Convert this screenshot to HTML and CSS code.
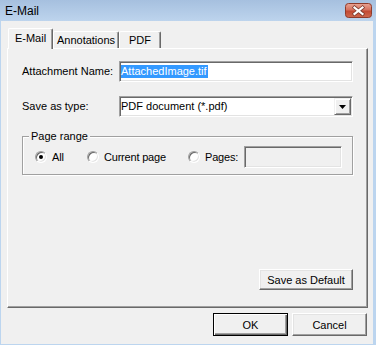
FILE: index.html
```html
<!DOCTYPE html>
<html lang="en">
  <head>
    <meta charset="UTF-8" />
    <title>E-Mail</title>
    <link rel="stylesheet" href="styles.css">
  </head>
  <body>
    <div class="window">
      <header class="titlebar">
        <span class="title">E-Mail</span>
        <button class="close" type="button">
          <svg width="27" height="15" viewBox="0 0 27 15">
            <defs>
              <linearGradient id="closeBg" x1="0" y1="0" x2="0" y2="1">
                <stop offset="0" stop-color="#e9a595" />
                <stop offset="0.45" stop-color="#d4715e" />
                <stop offset="0.55" stop-color="#c24a33" />
                <stop offset="1" stop-color="#cf6a4f" />
              </linearGradient>
            </defs>
            <rect x="0.5" y="0.5" width="26" height="14" rx="3" fill="url(#closeBg)" stroke="#8e3b2b" />
            <path d="M9.5 4.5 L17.5 11 M17.5 4.5 L9.5 11" stroke="#7a3a2e" stroke-width="3.6" stroke-linecap="square" />
            <path d="M9.5 4.5 L17.5 11 M17.5 4.5 L9.5 11" stroke="#ffffff" stroke-width="2.2" stroke-linecap="square" />
          </svg>
        </button>
      </header>

      <main class="frame">
        <nav class="tabs">
          <div class="tab tab-email active">E-Mail</div>
          <div class="tab tab-annotations">Annotations</div>
          <div class="tab tab-pdf">PDF</div>
        </nav>

        <section class="panel">
          <div class="row">
            <label class="row-label">Attachment Name:</label>
            <div class="field"><span class="selected-text">AttachedImage.tif</span></div>
          </div>

          <div class="row">
            <label class="row-label">Save as type:</label>
            <div class="field combo">
              <span class="combo-value">PDF document (*.pdf)</span>
              <span class="drop">
                <svg width="7" height="4" viewBox="0 0 7 4"><path d="M0 0 H7 L3.5 4 Z" fill="#000" /></svg>
              </span>
            </div>
          </div>

          <fieldset class="group">
            <legend>Page range</legend>
            <div class="options">
              <label class="opt opt-all"><span class="radio checked"></span>All</label>
              <label class="opt opt-current"><span class="radio"></span>Current page</label>
              <label class="opt opt-pages"><span class="radio"></span>Pages:</label>
              <div class="field pages-field"></div>
            </div>
          </fieldset>

          <div class="panel-actions">
            <button class="btn btn-wide" type="button">Save as Default</button>
          </div>
        </section>

        <footer class="buttons">
          <button class="btn default" type="button">OK</button>
          <button class="btn" type="button">Cancel</button>
        </footer>
      </main>
    </div>
  </body>
</html>
```

FILE: styles.css
```css
*,
*::before,
*::after {
  box-sizing: border-box;
}
body {
  margin: 0;
  font: 11px "Liberation Sans", Arial, sans-serif;
  color: #000;
}
.window {
  display: flex;
  flex-direction: column;
  width: 376px;
  height: 345px;
  background: #f0f0f0;
}
.titlebar {
  flex: none;
  display: flex;
  align-items: center;
  justify-content: space-between;
  height: 21px;
  padding: 0 4px 0 5px;
  background: linear-gradient(#a6c0df, #bdd4ed);
}
.title {
  font: 12px "Liberation Sans", Arial, sans-serif;
}
.close {
  display: block;
  width: 27px;
  height: 15px;
  padding: 0;
  border: none;
  background: none;
}
.close svg {
  display: block;
}

.frame {
  flex: 1;
  display: flex;
  flex-direction: column;
  border-style: solid;
  border-color: #bcd5ef;
  border-width: 0 3px 1px 1px;
  padding: 7px 5px 0 6px;
}

/* tabs */
.tabs {
  flex: none;
  display: flex;
  align-items: flex-end;
  height: 20px;
  padding-left: 1px;
  position: relative;
  z-index: 1;
}
.tab {
  height: 17px;
  line-height: 16px;
  text-align: center;
  border: 1px solid;
  border-color: #fff #696969 transparent #fff;
  border-bottom: none;
  border-radius: 2px 2px 0 0;
  box-shadow: inset -1px 0 #a0a0a0;
}
.tab.active {
  height: 21px;
  line-height: 18px;
  margin-bottom: -1px;
  background: #f0f0f0;
}
.tab-email {
  width: 45px;
}
.tab-annotations {
  width: 66px;
}
.tab-pdf {
  width: 42px;
}

/* panel */
.panel {
  flex: none;
  height: 260px;
  display: flex;
  flex-direction: column;
  padding: 12px 14px 17px;
  border: 1px solid;
  border-color: #fff #696969 #696969 #fff;
  box-shadow: inset -1px -1px #a0a0a0;
}
.row {
  display: flex;
  align-items: center;
  height: 21px;
}
.row + .row {
  margin-top: 14px;
}
.row-label {
  width: 97px;
  flex: none;
  padding-bottom: 2px;
}
.field {
  display: flex;
  align-items: center;
  height: 21px;
  padding-left: 1px;
  background: #fff;
  border: 1px solid;
  border-color: #a0a0a0 #fff #fff #a0a0a0;
  box-shadow: inset 1px 1px #696969, inset -1px -1px #e3e3e3;
}
.row .field {
  flex: 1;
}
.selected-text {
  background: #3399ff;
  color: #fff;
  line-height: 13px;
  padding: 0 1px 0 0;
}
.combo {
  justify-content: space-between;
}
.combo-value {
  padding-bottom: 1px;
}
.drop {
  display: flex;
  align-items: center;
  justify-content: center;
  width: 17px;
  height: 17px;
  margin-right: 1px;
  border: 1px solid;
  border-color: #f0f0f0 #696969 #696969 #f0f0f0;
  box-shadow: inset 1px 1px #fff, inset -1px -1px #a0a0a0;
  background: #f0f0f0;
}
.drop svg {
  display: block;
  margin-top: 1px;
}

/* page range */
.group {
  margin: 13px 0 0;
  padding: 0 0 6px;
  border: 1px solid #a0a0a0;
  box-shadow: inset 1px 1px #fff, 1px 1px #fff;
  min-width: 0;
}
.group legend {
  margin-left: 6px;
  padding: 0 2px;
  line-height: 13px;
  background: #f0f0f0;
}
.options {
  display: flex;
  align-items: center;
  height: 22px;
  margin-top: 3px;
  padding-left: 12px;
}
.opt {
  display: flex;
  align-items: center;
  gap: 5px;
  flex: none;
  letter-spacing: -0.2px;
}
.opt-all {
  width: 52px;
}
.opt-current {
  width: 101px;
}
.radio {
  position: relative;
  width: 12px;
  height: 12px;
  border-radius: 50%;
  background: #fff;
  border: 1px solid;
  border-color: #a0a0a0 #fff #fff #a0a0a0;
  box-shadow: inset 1px 1px #696969, inset -1px -1px #e3e3e3;
}
.radio.checked::after {
  content: "";
  position: absolute;
  left: 3px;
  top: 3px;
  width: 4px;
  height: 4px;
  border-radius: 50%;
  background: #000;
}
.pages-field {
  width: 98px;
  height: 22px;
  margin-left: 6px;
  background: #f0f0f0;
}

/* buttons */
.panel-actions {
  margin-top: auto;
  display: flex;
  justify-content: flex-end;
}
.btn {
  width: 75px;
  height: 23px;
  padding: 0;
  font: inherit;
  color: #000;
  background: #f0f0f0;
  border: 1px solid;
  border-color: #fff #696969 #696969 #fff;
  box-shadow: inset -1px -1px #a0a0a0, inset 1px 1px #e3e3e3;
}
.btn-wide {
  width: 94px;
  height: 21px;
}
.btn.default {
  border-color: #000;
  box-shadow: inset 1px 1px #fff, inset -1px -1px #696969, inset -2px -2px #a0a0a0;
}
.buttons {
  flex: none;
  display: flex;
  justify-content: flex-end;
  gap: 4px;
  padding: 5px 1px 0 0;
}
```
